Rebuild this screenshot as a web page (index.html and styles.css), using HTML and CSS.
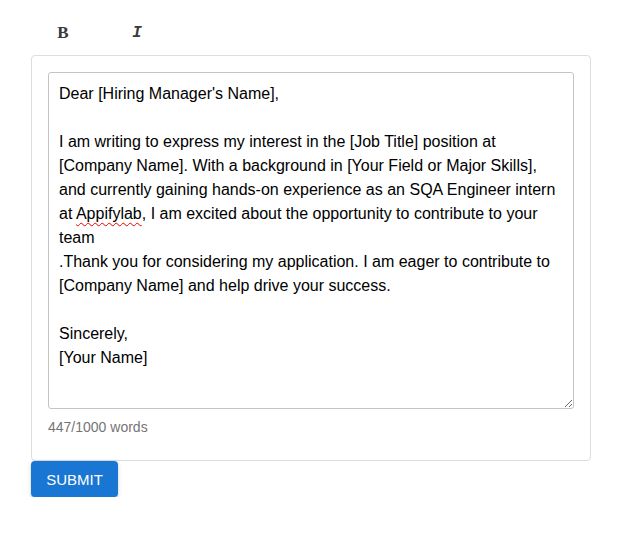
FILE: index.html
```html
<!DOCTYPE html>
<html>
<head>
<meta charset="utf-8">
<link rel="stylesheet" href="styles.css">
</head>
<body>
<div class="page">
  <div class="toolbar">
    <button class="tool tool-b">B</button>
    <button class="tool tool-i">I</button>
  </div>
  <div class="card">
    <div class="editor">Dear [Hiring Manager's Name],

I am writing to express my interest in the [Job Title] position at [Company Name]. With a background in [Your Field or Major Skills], and currently gaining hands-on experience as an SQA Engineer intern at <span class="misspelt">Appifylab</span>, I am excited about the opportunity to contribute to your team
.Thank you for considering my application. I am eager to contribute to [Company Name] and help drive your success.

Sincerely,
[Your Name]</div>
    <div class="count">447/1000 words</div>
  </div>
  <button class="submit">SUBMIT</button>
</div>
</body>
</html>
```

FILE: styles.css
```css
html, body {
  margin: 0;
  padding: 0;
  background: #fff;
}
.page {
  padding: 21px 0 0 31px;
  width: 560px;
  font-family: "Liberation Sans", Arial, sans-serif;
}
.toolbar {
  display: flex;
  height: 34px;
  align-items: flex-start;
}
.tool {
  border: none;
  background: none;
  padding: 0;
  margin: 0;
  font-size: 16px;
  color: #3a3a3a;
  height: 24px;
  line-height: 24px;
  cursor: pointer;
}
.tool-b {
  font-family: "Liberation Serif", "Times New Roman", serif;
  font-size: 17px;
  font-weight: bold;
  margin-left: 26px;
  width: 12px;
}
.tool-i {
  font-family: "Liberation Mono", "Courier New", monospace;
  font-style: italic;
  font-weight: bold;
  margin-left: 61px;
  width: 14px;
}
.card {
  border: 1px solid #ddd;
  border-radius: 4px;
  padding: 16px 16px 23px 16px;
}
.editor {
  border: 1px solid #c4c4c4;
  border-radius: 3px;
  height: 317px;
  padding: 9px 10px 9px 10px;
  font-size: 16px;
  line-height: 24px;
  color: #000;
  white-space: pre-wrap;
  overflow: auto;
  resize: both;
}
.misspelt {
  text-decoration: underline wavy #e00;
  text-decoration-thickness: 1px;
  text-underline-offset: 3px;
}
.count {
  margin-top: 8px;
  font-size: 14px;
  line-height: 20px;
  color: #757575;
}
.submit {
  display: block;
  margin-top: 0;
  border: none;
  border-radius: 4px;
  background: #1976d2;
  color: #fff;
  font-family: "Liberation Sans", Arial, sans-serif;
  font-size: 15px;
  width: 87px;
  height: 36px;
  padding: 0;
  box-shadow: 0 3px 1px -2px rgba(0,0,0,0.2), 0 2px 2px 0 rgba(0,0,0,0.14), 0 1px 5px 0 rgba(0,0,0,0.12);
}
```
